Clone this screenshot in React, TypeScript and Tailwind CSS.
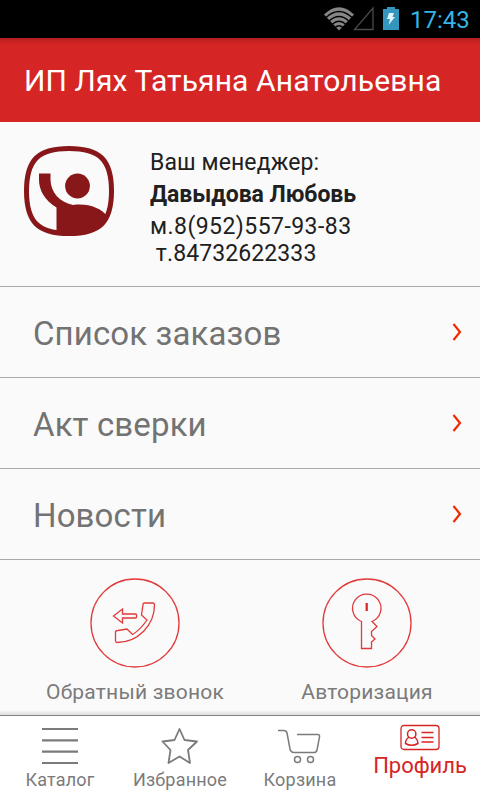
import type { ReactNode } from "react";
import { clsx } from "clsx";

const menuItems = ["Список заказов", "Акт сверки", "Новости"];

function StatusBar() {
  return (
    <div className="flex h-[38px] items-center bg-black pl-[323px]">
      <svg width="32" height="26" viewBox="0 0 32 26" fill="none">
        <path d="M1 8.5 Q16 -6 31 8.5 L16 24.500 Z" fill="#868686" />
        <g stroke="#000" strokeWidth="1.300">
          <path d="M3 11.500 Q16 -0.500 29 11.500" />
          <path d="M6 15 Q16 6 26 15" />
          <path d="M9 18.500 Q16 12 23 18.500" />
          <path d="M12 21.500 Q16 18 20 21.500" />
        </g>
      </svg>
      <svg className="overflow-visible" width="22" height="26" viewBox="0 0 22 26" fill="none">
        <path d="M-0.500 23.500 H18 V2 Z" stroke="#4a4a4a" strokeWidth="1.300" />
      </svg>
      <svg className="ml-[6px]" width="16" height="26" viewBox="0 0 16 26">
        <path d="M4 1h8v2h4v21H0V3h4z" fill="#3596bd" />
        <path d="M6 7h5l-1.5 4H12L5.5 19 7 13H4z" fill="#dff3fa" />
      </svg>
      <span className="ml-[11px] pt-[2px] text-[24px] leading-6 tracking-[0px] text-[#33b5e5]">17:43</span>
    </div>
  );
}

function ManagerLogo() {
  return (
    <svg className="mt-[24px] ml-[24px]" width="90" height="90" viewBox="0 0 90 90">
      <path
        d="M45 2.500C76 2.500 87.500 14 87.500 45S76 87.500 45 87.500 2.500 76 2.500 45 14 2.500 45 2.500Z"
        fill="none"
        stroke="#871718"
        strokeWidth="5"
      />
      <circle cx="53.5" cy="40" r="12.4" fill="#871718" />
      <path
        d="M15 27.5H26.5V34C27 46 35 56 49 59C64 57 77 62 83 70C76 84 65 88 45 88Q38 88 32.500 87V61.500C21 55 15 44 15 34Z"
        fill="#871718"
      />
    </svg>
  );
}

function MenuRow({ label }: { label: string }) {
  return (
    <div className="flex h-[91px] items-center border-b border-[#a9a9a9] pr-[17px] pl-[33px]">
      <span className="flex-1 pt-[3px] text-[33px] tracking-[0.13px] text-[#737373]">{label}</span>
      <svg width="12" height="22" viewBox="0 0 12 22" fill="none">
        <path d="M2.500 3 L9 11 L2.500 19" stroke="#ee2a00" strokeWidth="2.200" />
      </svg>
    </div>
  );
}

function ActionButton({ label, className, children }: { label: string; className: string; children: ReactNode }) {
  return (
    <button className={clsx("flex flex-col items-center", className)}>
      <svg width="90" height="90" viewBox="0 0 90 90" fill="none" stroke="#e03a3a" strokeWidth="1.300">
        <circle cx="45" cy="45" r="44" />
        {children}
      </svg>
      <span className="mt-[12px] text-[21px] leading-6 tracking-[0.2px] whitespace-nowrap text-[#7b7b7b]">{label}</span>
    </button>
  );
}

function NavItem({ label, children }: { label: string; children: ReactNode }) {
  return (
    <button className="flex flex-col items-center text-[#7b7b7b]">
      <svg className="mt-[8px]" width="48" height="44" viewBox="0 0 48 44" fill="none" stroke="currentColor">
        {children}
      </svg>
      <span className="text-[18px] leading-6 tracking-[0.2px]">{label}</span>
    </button>
  );
}

export default function App() {
  return (
    <div className="flex h-[800px] w-[480px] flex-col overflow-hidden bg-[#fafafa] font-['Roboto',sans-serif]">
      <StatusBar />

      <header className="flex h-[84px] items-center bg-linear-to-b from-[#b51f1f] via-[#d62525] via-[8%] to-[#d62525] pl-[24px]">
        <h1 className="pt-[1px] text-[30px] tracking-[0.12px] whitespace-nowrap text-white">ИП Лях Татьяна Анатольевна</h1>
      </header>

      {/* Manager contacts */}
      <section className="flex h-[165px] border-b border-[#a9a9a9]">
        <ManagerLogo />
        <div className="ml-[36px] pt-[27px] text-[23px] leading-[27px] tracking-[0.1px] whitespace-pre text-[#202020]">
          <p>Ваш менеджер:</p>
          <p className="my-[5px] font-bold tracking-[-0.05px]">Давыдова Любовь</p>
          <p className="tracking-[0.45px]">м.8(952)557-93-83</p>
          <p> т.84732622333</p>
        </div>
      </section>

      {menuItems.map((label) => (
        <MenuRow key={label} label={label} />
      ))}

      <section className="flex h-[150px] gap-[78px] pt-[18px] pl-[47px]">
        <ActionButton label="Обратный звонок" className="w-[176px]">
          <path d="M23.500 38 L32.500 31 V36 H45.500 Q46.500 36 46.500 37 V39 Q46.500 40 45.500 40 H32.500 V45 Z" />
          <path d="M54.500 25 H63 Q64.500 25 64.500 27 C64.500 47 48 64.500 27 64.500 Q25.500 64.500 25.500 63 V54 Q25.500 52.500 28 52.500 L37 51 L42.500 56.500 Q50 52 57 42 L51.500 37 L53 26.500 Q53 25 54.500 25Z" />
        </ActionButton>
        <ActionButton label="Авторизация" className="ml-px w-[130px]">
          <path d="M39.500 43.500 A14.200 14.200 0 1 1 50 43.500 L55 48.500 L49.500 53.500 V57.500 L53 61 L49.500 64 V70.500 H39.500 Z" />
          <path d="M44.700 25 V33" strokeWidth="2.200" stroke="#d62525" />
        </ActionButton>
      </section>

      <div className="h-[5px] bg-linear-to-b from-[#fafafa] to-[#dedede]" />
      <nav className="grid h-[85px] grid-cols-4 border-t border-[#858585] bg-white">
        <NavItem label="Каталог">
          <path d="M6 5h36M6 16.300h36M6 27.600h36M6 39h36" strokeWidth="2.200" />
        </NavItem>
        <NavItem label="Избранное">
          <path
            d="M23.500 5 L28.500 16 L41 17.500 L32 26 L34 39 L23.500 32.500 L12.500 39 L14.500 26 L6.500 17.500 L18.500 16 Z"
            strokeWidth="1.800"
            strokeLinejoin="round"
          />
        </NavItem>
        <NavItem label="Корзина">
          <path
            d="M2 6.500 H8 Q10.500 6.500 11 9 L14 25 Q14.800 28.500 18 28.500 H38 Q40.500 28.500 41 26 L43.500 13 Q43.800 10.500 42 10.500 H21"
            strokeWidth="1.500"
          />
          <circle cx="21.500" cy="35.500" r="3" strokeWidth="1.500" />
          <circle cx="34.500" cy="35.500" r="3" strokeWidth="1.500" />
        </NavItem>
        <button className="flex flex-col items-center text-[#d62525]">
          <svg className="mt-[8px]" width="40" height="27" viewBox="0 0 40 27" fill="none" stroke="currentColor">
            <rect x="1" y="1.500" width="38" height="24" rx="3" strokeWidth="1.300" />
            <circle cx="11.700" cy="10" r="4.200" strokeWidth="1.500" />
            <path d="M9 13 Q5.500 15.500 5.500 19.500 Q11.700 23 17.900 19.500 Q17.900 15.500 14.500 13" strokeWidth="1.500" />
            <path d="M21.500 8.500h12M21.500 13.500h12M21.500 18h12" strokeWidth="1.500" />
          </svg>
          <span className="mt-[3px] text-[22px] leading-6 tracking-[-0.05px]">Профиль</span>
        </button>
      </nav>
    </div>
  );
}
